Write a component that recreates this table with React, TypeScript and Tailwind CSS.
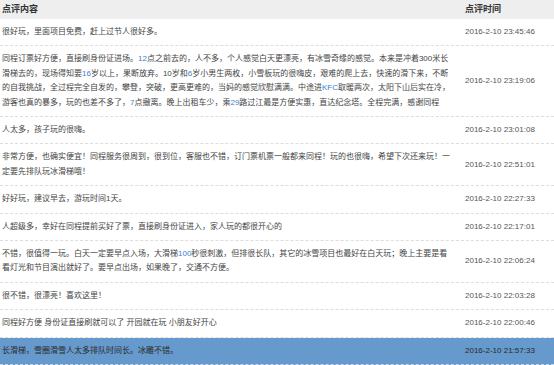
import React from "react";

type Row = { lines: string[]; time: string; selected?: boolean };

const rows: Row[] = [
  { lines: ["很好玩，里面项目免费，赶上过节人很好多。"], time: "2016-2-10 23:45:46" },
  {
    lines: [
      "同程订票好方便，直接刷身份证进场。{12}点之前去的，人不多，个人感觉白天更漂亮，有冰雪奇缘的感觉。本来是冲着300米长",
      "滑梯去的，现场得知要{16}岁以上，果断放弃。10岁和{6}岁小男生两枚，小雪板玩的很嗨皮，艰难的爬上去，快速的滑下来，不断",
      "的自我挑战，全过程完全自发的，攀登，突破，更高更难的，当妈的感觉欣慰满满。中途进{KFC}取暖两次，太阳下山后实在冷，",
      "游客也真的暴多，玩的也差不多了，{7}点撤离。晚上出租车少，乘{29}路过江最是方便实惠，直达纪念塔。全程完满，感谢同程",
    ],
    time: "2016-2-10 23:19:06",
  },
  { lines: ["人太多，孩子玩的很嗨。"], time: "2016-2-10 23:01:08" },
  {
    lines: [
      "非常方便，也确实便宜！同程服务很周到，很到位，客服也不错，订门票机票一般都来同程！玩的也很嗨，希望下次还来玩！一",
      "定要先排队玩冰滑梯哦！",
    ],
    time: "2016-2-10 22:51:01",
  },
  { lines: ["好好玩，建议早去，游玩时间1天。"], time: "2016-2-10 22:27:33" },
  { lines: ["人超级多，幸好在同程提前买好了票，直接刷身份证进入，家人玩的都很开心的"], time: "2016-2-10 22:17:01" },
  {
    lines: [
      "不错，很值得一玩。白天一定要早点入场，大滑梯{100}秒很刺激，但排很长队，其它的冰雪项目也最好在白天玩；晚上主要是看",
      "看灯光和节目演出就好了。要早点出场，如果晚了，交通不方便。",
    ],
    time: "2016-2-10 22:06:24",
  },
  { lines: ["很不错，很漂亮！喜欢这里！"], time: "2016-2-10 22:03:28" },
  { lines: ["同程好方便 身份证直接刷就可以了 开园就在玩 小朋友好开心"], time: "2016-2-10 22:00:46" },
  { lines: ["长滑梯，雪圈滑雪人太多排队时间长。冰雕不错。"], time: "2016-2-10 21:57:33", selected: true },
];

function Line({ text, selected }: { text: string; selected?: boolean }) {
  const parts = text.split(/\{([^}]*)\}/);
  return (
    <div className="whitespace-nowrap">
      {parts.map((p, i) =>
        i % 2 === 1 ? (
          <span key={i} className={selected ? "text-[#1f4f8a]" : "text-[#3b7fd0]"}>
            {p}
          </span>
        ) : (
          <span key={i}>{p}</span>
        )
      )}
    </div>
  );
}

export default function App() {
  return (
    <div
      className="w-[554px] h-[365px] overflow-hidden bg-white text-[8px] text-[#444444]"
      style={{ fontFamily: '"Liberation Sans", "Noto Sans CJK SC", sans-serif' }}
    >
      <div className="flex h-[19px] items-center bg-[#eeeeee] text-[9px] font-bold text-[#333333]">
        <div className="w-[463px] pl-[2px]">点评内容</div>
        <div className="pl-[2px]">点评时间</div>
      </div>
      {rows.map((r, idx) => (
        <div
          key={idx}
          className={
            "flex items-center border-b border-dashed " +
            (r.selected ? "bg-[#6699cc] border-[#c9d9ec] text-[#2a2a2a]" : "border-[#dddddd]")
          }
        >
          <div className="w-[463px] shrink-0 pl-[2px] pr-[8px] py-[6px] leading-[14.4px]">
            {r.lines.map((l, i) => (
              <Line key={i} text={l} selected={r.selected} />
            ))}
          </div>
          <div className={"pl-[2px] whitespace-nowrap " + (r.selected ? "text-[#2a2a2a]" : "text-[#555555]")}>
            {r.time}
          </div>
        </div>
      ))}
    </div>
  );
}
